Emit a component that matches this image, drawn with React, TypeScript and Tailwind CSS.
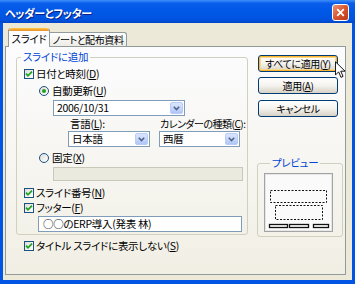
import React from "react";

const jp =
  "font-['Noto_Sans_CJK_JP','Noto_Sans',sans-serif] [font-feature-settings:'palt']";

function Check({ children }: { children: React.ReactNode }) {
  return (
    <div className="flex items-center h-[14px] gap-[2px]">
      <span className="w-[10px] h-[10px] border border-[#1C5180] bg-gradient-to-br from-[#DCDCD7] to-white flex items-center justify-center">
        <svg width="8" height="8" viewBox="0 0 8 8">
          <path d="M1 3.6 L3 5.8 L7 1.6" fill="none" stroke="#21A121" strokeWidth="1.7" />
        </svg>
      </span>
      <span className="text-[10.5px] leading-[14px] tracking-[-0.3px] text-black whitespace-nowrap">
        {children}
      </span>
    </div>
  );
}

function Radio({ on, children }: { on?: boolean; children: React.ReactNode }) {
  return (
    <div className="flex items-center h-[14px] gap-[3px]">
      <span className="w-[10px] h-[10px] rounded-full border border-[#1C5180] bg-gradient-to-br from-[#DCDCD7] to-white flex items-center justify-center">
        {on && <span className="w-[4px] h-[4px] rounded-full bg-[#21A121]" />}
      </span>
      <span className="text-[10.5px] leading-[14px] tracking-[-0.3px] text-black whitespace-nowrap">
        {children}
      </span>
    </div>
  );
}

function Combo({ className, value }: { className: string; value: string }) {
  return (
    <div className={`h-[16px] border border-[#7F9DB9] bg-white flex items-center ${className}`}>
      <span className="pl-[3px] text-[10.5px] leading-[14px] tracking-[-0.3px] text-black">{value}</span>
      <span className="ml-auto mr-[1px] w-[13px] h-[12px] rounded-[2px] border border-[#B9CCF8] bg-gradient-to-b from-[#DCE6FD] to-[#B0C6F7] flex items-center justify-center">
        <svg width="7" height="5" viewBox="0 0 7 5">
          <path d="M0.8 0.8 L3.5 3.6 L6.2 0.8" fill="none" stroke="#4D6185" strokeWidth="1.5" />
        </svg>
      </span>
    </div>
  );
}

function Btn({ children, hot }: { children: React.ReactNode; hot?: boolean }) {
  return (
    <div
      className={`w-[80px] h-[17px] ml-[1px] rounded-[3px] border border-[#003C74] bg-gradient-to-b from-white via-[#F4F3EE] to-[#D8D2C6] flex items-center justify-center text-[10px] leading-[14px] tracking-[-0.4px] text-black whitespace-nowrap ${
        hot ? "shadow-[inset_0_0_0_1px_#F8B330,inset_0_0_0_2px_#FDD889]" : ""
      }`}
    >
      {children}
    </div>
  );
}

export default function App() {
  return (
    <div className={`relative w-[355px] h-[284px] bg-[#0055E5] flex flex-col ${jp}`}>
      {/* title bar */}
      <div className="h-[23px] flex items-center pl-[5px] pr-[6px] bg-[linear-gradient(to_bottom,#3D8EF9_0%,#0A5DEB_15%,#0058E6_50%,#0053DF_85%,#0045C8_100%)]">
        <span className="mt-[2px] text-[11px] leading-[14px] tracking-[-0.4px] font-bold text-white [text-shadow:1px_1px_#0A1F88]">
          ヘッダーとフッター
        </span>
        <div className="ml-auto mt-[2px] w-[17px] h-[17px] rounded-[3px] border border-white bg-gradient-to-br from-[#E99478] via-[#D8552F] to-[#B8391A] flex items-center justify-center">
          <svg width="9" height="9" viewBox="0 0 9 9">
            <path d="M1.2 1.2 L7.8 7.8 M7.8 1.2 L1.2 7.8" stroke="white" strokeWidth="1.8" />
          </svg>
        </div>
      </div>

      {/* body */}
      <div className="flex-1 mx-[3px] mb-[4px] bg-[#ECE9D8] flex flex-col pl-[2px] pr-[6px] pt-[5px] pb-[5px]">
        {/* tabs */}
        <div className="h-[18px] flex items-end pl-[3px] relative z-10">
          <div className="w-[42px] h-[19px] -mb-[1px] rounded-t-[3px] border-x border-[#919B9C] bg-[#FCFCFE] flex flex-col">
            <div className="h-[3px] rounded-t-[3px] bg-gradient-to-b from-[#FFC83C] to-[#E68B2C]" />
            <div className="flex-1 flex items-center justify-center text-[10.5px] leading-[14px] tracking-[-0.3px] text-black whitespace-nowrap">
              スライド
            </div>
          </div>
          <div className="w-[77px] h-[14px] rounded-tr-[3px] border-t border-r border-[#919B9C] bg-gradient-to-b from-white to-[#ECEBE6] flex items-center justify-center text-[10px] leading-[13px] tracking-[-0.4px] text-black whitespace-nowrap">
            ノートと配布資料
          </div>
        </div>

        {/* panel */}
        <div className="flex-1 border border-[#919B9C] bg-gradient-to-b from-[#FCFCFE] to-[#F1EFE4] flex pt-[4px] pl-[10px]">
          {/* left column */}
          <div className="w-[232px] flex flex-col">
            <fieldset className="border border-[#D0D0BF] rounded-[3px] pb-[2px]">
              <legend className="ml-[4px] px-[2px] text-[10.5px] leading-[12px] tracking-[-0.3px] text-[#0046D5]">
                スライドに追加
              </legend>
              <div className="mt-[4px] pl-[7px]">
                <Check>
                  日付と時刻(<u>D</u>)
                </Check>
              </div>
              <div className="mt-[3px] pl-[22px]">
                <Radio on>
                  自動更新(<u>U</u>)
                </Radio>
              </div>
              <div className="mt-[2px] pl-[36px]">
                <Combo className="w-[132px]" value="2006/10/31" />
              </div>
              <div className="mt-[2px] pl-[51px] flex gap-[9px]">
                <div className="w-[82px] flex flex-col">
                  <span className="h-[12px] pl-[2px] text-[10.5px] leading-[12px] tracking-[-0.3px] text-black">
                    言語(<u>L</u>):
                  </span>
                  <Combo className="mt-[1px] w-[82px]" value="日本語" />
                </div>
                <div className="w-[81px] flex flex-col">
                  <span className="h-[12px] pl-[1px] text-[10px] leading-[12px] tracking-[-0.5px] text-black whitespace-nowrap">
                    カレンダーの種類(<u>C</u>):
                  </span>
                  <Combo className="mt-[1px] w-[81px]" value="西暦" />
                </div>
              </div>
              <div className="mt-[4px] pl-[22px]">
                <Radio>
                  固定(<u>X</u>)
                </Radio>
              </div>
              <div className="mt-[2px] pl-[36px]">
                <div className="w-[190px] h-[14px] border border-[#C9C7BA] bg-[#EBEADF]" />
              </div>
              <div className="mt-[5px] pl-[7px]">
                <Check>
                  スライド番号(<u>N</u>)
                </Check>
              </div>
              <div className="mt-[1px] pl-[7px]">
                <Check>
                  フッター(<u>F</u>)
                </Check>
              </div>
              <div className="mt-[1px] pl-[21px]">
                <div className="w-[204px] h-[16px] border border-[#7F9DB9] bg-white flex items-center pl-[4px] text-[10.5px] leading-[14px] tracking-[-0.3px] text-black">
                  ○○のERP導入(発表 林)
                </div>
              </div>
            </fieldset>
            <div className="mt-[4px] pl-[8px]">
              <Check>
                タイトル スライドに表示しない(<u>S</u>)
              </Check>
            </div>
          </div>

          {/* right column */}
          <div className="ml-[9px] w-[86px] flex flex-col">
            <div className="mt-[4px]">
              <Btn hot>
                すべてに適用(<u>Y</u>)
              </Btn>
            </div>
            <div className="mt-[5px]">
              <Btn>
                適用(<u>A</u>)
              </Btn>
            </div>
            <div className="mt-[6px]">
              <Btn>キャンセル</Btn>
            </div>
            <fieldset className="mt-[40px] border border-[#D0D0BF] rounded-[3px] pb-[4px] pl-[6px]">
              <legend className="ml-[6px] px-[2px] text-[10.5px] leading-[12px] tracking-[-0.3px] text-[#0046D5]">
                プレビュー
              </legend>
              <svg className="mt-[4px] block" width="69" height="59" viewBox="0 0 69 59">
                <rect x="0.5" y="0.5" width="68" height="58" fill="#FAFAFA" stroke="#A3A3A3" />
                <rect x="1.5" y="1.5" width="66" height="56" fill="none" stroke="#E6E6E6" />
                <rect x="6.5" y="17.5" width="56" height="12" fill="none" stroke="#111" strokeDasharray="2 1.5" />
                <rect x="11.5" y="32.5" width="47" height="14" fill="none" stroke="#111" strokeDasharray="2 1.5" />
                <rect x="5.5" y="51.5" width="18" height="3" fill="white" stroke="#111" strokeWidth="1.3" />
                <rect x="25.5" y="51.5" width="19" height="3" fill="white" stroke="#111" strokeWidth="1.3" />
                <rect x="49.5" y="51.5" width="15" height="3" fill="white" stroke="#111" strokeWidth="1.3" />
              </svg>
            </fieldset>
          </div>
        </div>
      </div>

      {/* mouse cursor over the hot button */}
      <svg className="absolute left-[335px] top-[61px]" width="11" height="18" viewBox="0 0 12 19">
        <path
          d="M0.5 0.5 L0.5 15 L4 11.5 L6.5 17.5 L8.8 16.5 L6.3 10.8 L11 10.8 Z"
          fill="white"
          stroke="black"
          strokeWidth="1"
          strokeLinejoin="round"
        />
      </svg>
    </div>
  );
}
